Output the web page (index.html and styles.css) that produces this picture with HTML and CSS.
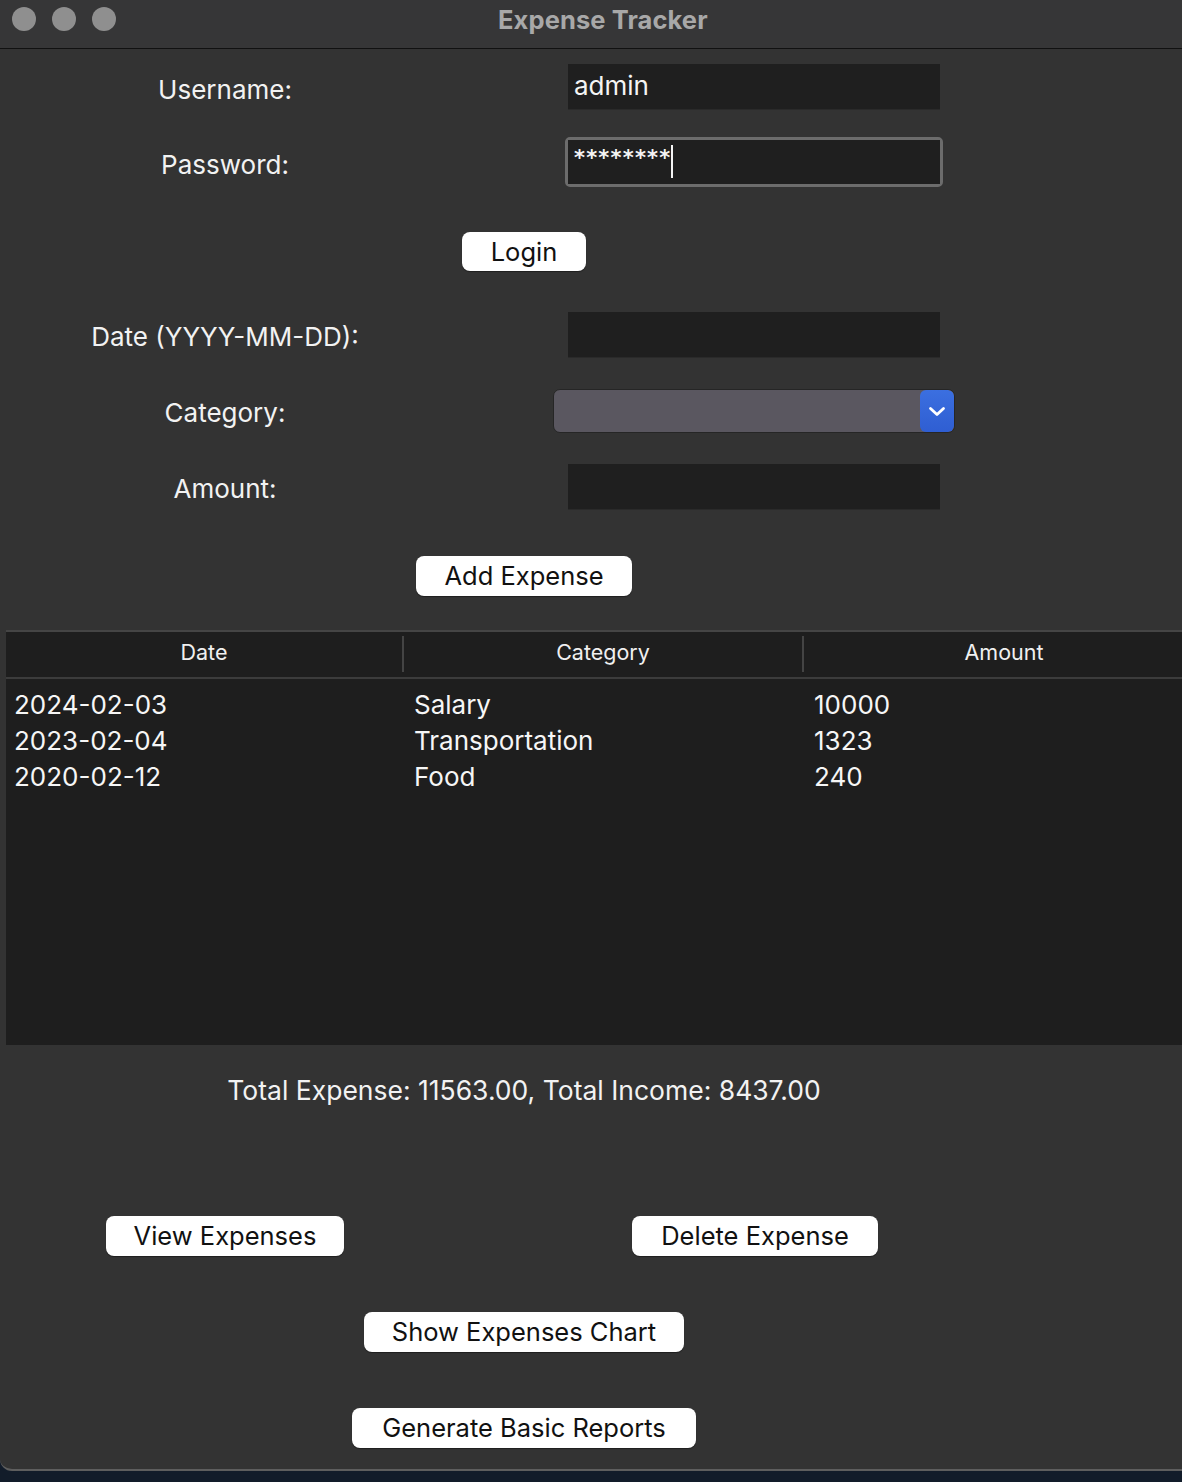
FILE: index.html
```html
<!DOCTYPE html>
<html lang="en">
<head>
<meta charset="utf-8">
<title>Expense Tracker</title>
<link rel="stylesheet" href="styles.css">
</head>
<body>
<div class="window">
  <header class="titlebar">
    <div class="lights">
      <span class="light"></span>
      <span class="light"></span>
      <span class="light"></span>
    </div>
    <div class="title">Expense Tracker</div>
  </header>

  <main class="content">
    <div class="row row-user">
      <div class="label">Username:</div>
      <div class="field"><div class="entry"><span class="entry-text">admin</span></div></div>
    </div>
    <div class="row row-pass">
      <div class="label">Password:</div>
      <div class="field"><div class="entry-focus"><div class="entry"><span class="stars">********</span><span class="caret"></span></div></div></div>
    </div>
    <div class="center-row row-login"><button class="btn">Login</button></div>

    <div class="row row-date">
      <div class="label">Date (YYYY-MM-DD):</div>
      <div class="field"><div class="entry"></div></div>
    </div>
    <div class="row row-cat">
      <div class="label">Category:</div>
      <div class="field">
        <div class="combo">
          <div class="combo-body"></div>
          <div class="combo-btn">
            <svg width="18" height="11" viewBox="0 0 18 11"><path d="M2.5 2.5 L9 8.5 L15.5 2.5" fill="none" stroke="#fff" stroke-width="2.8" stroke-linecap="round" stroke-linejoin="round"/></svg>
          </div>
        </div>
      </div>
    </div>
    <div class="row row-amount">
      <div class="label">Amount:</div>
      <div class="field"><div class="entry"></div></div>
    </div>
    <div class="center-row row-add"><button class="btn">Add Expense</button></div>

    <section class="table">
      <div class="thead">
        <div class="th"><span class="th-in sep">Date</span></div>
        <div class="th"><span class="th-in sep">Category</span></div>
        <div class="th"><span class="th-in">Amount</span></div>
      </div>
      <div class="tbody">
        <div class="tr"><span class="td c1">2024-02-03</span><span class="td">Salary</span><span class="td">10000</span></div>
        <div class="tr"><span class="td c1">2023-02-04</span><span class="td">Transportation</span><span class="td">1323</span></div>
        <div class="tr"><span class="td c1">2020-02-12</span><span class="td">Food</span><span class="td">240</span></div>
      </div>
    </section>

    <div class="center-row total">Total Expense: 11563.00, Total Income: 8437.00</div>

    <div class="row row-actions">
      <div class="cell"><button class="btn">View Expenses</button></div>
      <div class="cell"><button class="btn">Delete Expense</button></div>
    </div>
    <div class="center-row row-chart"><button class="btn">Show Expenses Chart</button></div>
    <div class="center-row row-report"><button class="btn">Generate Basic Reports</button></div>
  </main>
</div>
</body>
</html>
```

FILE: styles.css
```css
* { box-sizing: border-box; }
html, body {
  margin: 0;
  padding: 0;
  height: 1482px;
  overflow: hidden;
  background: #121c2a;
  font-family: Inter, "Liberation Sans", sans-serif;
}
.window {
  width: 1182px;
  height: 1471px;
  background: #333333;
  border-bottom: 2px solid #5e5e5e;
  border-bottom-left-radius: 12px;
  overflow: hidden;
}
.titlebar {
  height: 49px;
  background: #363637;
  border-bottom: 1px solid #111;
  display: flex;
  align-items: center;
  padding-left: 12px;
}
.lights {
  display: flex;
  gap: 16px;
  width: 400px;
  margin-top: -10px;
}
.light {
  width: 24px;
  height: 24px;
  border-radius: 50%;
  background: #8f8f8f;
}
.title {
  margin-left: 86px;
  margin-top: -10px;
  color: #a8a8a8;
  font-weight: 700;
  font-size: 25.5px;
  letter-spacing: 0.1px;
}
.content {
  display: flex;
  flex-direction: column;
}
.row {
  display: grid;
  grid-template-columns: 450px 608px;
  align-items: center;
}
.label {
  text-align: center;
  color: #f2f2f2;
  font-size: 26px;
  margin-top: 3px;
}
.field {
  display: flex;
  justify-content: center;
}
.entry {
  width: 372px;
  height: 45px;
  background: #1f1f1f;
  display: flex;
  align-items: center;
  padding-left: 6px;
  box-shadow: 0 1px 0 #2a2a2a;
}
.entry-text {
  color: #f4f4f4;
  font-size: 26px;
  margin-top: -2px;
}
.entry-focus {
  width: 378px;
  height: 50px;
  border: 3px solid #6c6c6c;
  border-radius: 5px;
}
.entry-focus .entry {
  width: 372px;
  height: 44px;
  box-shadow: none;
  align-items: flex-start;
}
.stars {
  color: #f4f4f4;
  font-size: 21px;
  font-weight: 700;
  letter-spacing: 1.2px;
  margin-top: 6px;
  font-family: "DejaVu Sans", sans-serif;
}
.caret {
  width: 2px;
  height: 33px;
  background: #f4f4f4;
  margin-top: 5px;
  margin-left: 0;
}
.row-user { margin-top: 15px; }
.row-user .label { margin-top: 5px; }
.row-pass { margin-top: 28px; }
.row-pass .label { margin-top: 5px; }
.center-row {
  width: 1048px;
  display: flex;
  justify-content: center;
}
.btn {
  height: 40px;
  padding: 0 28px;
  border: none;
  border-radius: 8px;
  background: #ffffff;
  color: #111;
  font-family: Inter, "Liberation Sans", sans-serif;
  font-size: 25.5px;
  line-height: 38px;
  box-shadow: 0 1px 1px rgba(0,0,0,0.4);
}
.row-login { margin-top: 45px; }
.row-login .btn { height: 39px; width: 124px; padding: 0; }
.row-date { margin-top: 41px; }
.row-cat { margin-top: 32px; }
.row-amount { margin-top: 31px; }
.combo {
  width: 402px;
  height: 44px;
  display: flex;
  border-radius: 7px;
  border: 1px solid #262626;
  background: #5a5760;
  overflow: hidden;
}
.combo-body { flex: 1; }
.combo-btn {
  width: 34px;
  background: linear-gradient(#3b6fe0, #2f5ed2);
  border-radius: 6px;
  display: flex;
  align-items: center;
  justify-content: center;
}
.row-add { margin-top: 47px; }
.row-add .btn { width: 216px; padding: 0; }
.table {
  margin-top: 34px;
  margin-left: 6px;
  height: 415px;
  background: #1e1e1e;
  border-top: 2px solid #454545;
  display: flex;
  flex-direction: column;
}
.thead {
  display: grid;
  grid-template-columns: 398px 400px 400px;
  height: 47px;
  border-bottom: 2px solid #3c3c3c;
  align-items: center;
}
.th {
  display: flex;
}
.th-in {
  flex: 1;
  height: 36px;
  line-height: 32px;
  text-align: center;
  color: #f0f0f0;
  font-size: 21.5px;
  margin-top: -2px;
}
.th-in.sep { border-right: 2px solid #444; }
.tbody {
  flex: 1;
  padding-top: 7px;
}
.tr {
  display: grid;
  grid-template-columns: 398px 400px 400px;
  height: 36px;
  align-items: center;
}
.td {
  color: #f6f6f6;
  font-size: 26px;
  padding-left: 10px;
}
.td.c1 { padding-left: 8px; }
.total {
  margin-top: 30px;
  height: 30px;
  line-height: 30px;
  color: #f2f2f2;
  font-size: 26.5px;
}
.row-actions { margin-top: 111px; }
.cell { display: flex; justify-content: center; }
.row-actions .cell:first-child .btn { width: 238px; padding: 0; }
.row-actions .cell:last-child .btn { width: 246px; padding: 0; }
.row-actions .cell:last-child { padding-left: 2px; }
.row-chart { margin-top: 56px; }
.row-chart .btn { width: 320px; padding: 0; }
.row-report { margin-top: 56px; }
.row-report .btn { width: 344px; padding: 0; }
```
